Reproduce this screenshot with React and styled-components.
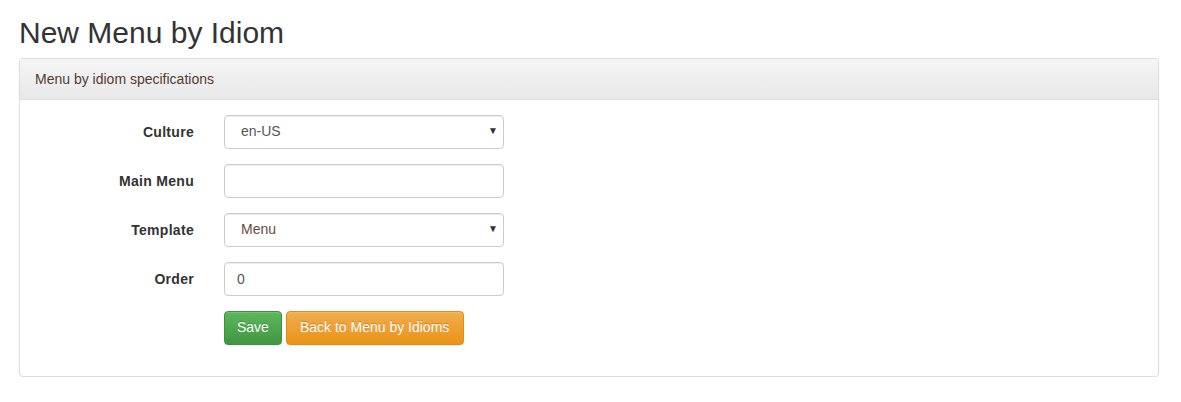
import React from "react";
import styled, { createGlobalStyle } from "styled-components";

// page defaults
const GlobalStyle = createGlobalStyle`
  html, body {
    margin: 0;
    padding: 0;
    background: #fff;
  }
  body {
    font-family: "Liberation Sans", Arial, Helvetica, sans-serif;
    font-size: 14px;
    line-height: 1.42857;
    color: #333;
  }
  * {
    box-sizing: border-box;
  }
`;

const Page = styled.div`
  padding: 0 22px 0 19px;
`;

const Title = styled.h2`
  margin: 16px 0 9px;
  font-size: 30px;
  font-weight: 500;
  line-height: 1.1;
  color: #333;
`;

// panel
const Panel = styled.div`
  border: 1px solid #ddd;
  border-radius: 4px;
  background: #fff;
  box-shadow: 0 1px 2px rgba(0, 0, 0, 0.06);
  overflow: hidden;
`;

const PanelHeading = styled.div`
  padding: 10px 15px;
  height: 41px;
  font-size: 14px;
  line-height: 20px;
  color: #553a33;
  background-image: linear-gradient(to bottom, #f5f5f5 0%, #e8e8e8 100%);
  border-bottom: 1px solid #ddd;
`;

const PanelBody = styled.div`
  padding: 15px 15px 16px;
`;

// form rows
const FormGroup = styled.div`
  display: grid;
  grid-template-columns: 159px 280px;
  column-gap: 30px;
  align-items: center;
  margin-bottom: 15px;
`;

const Label = styled.label`
  text-align: right;
  font-weight: bold;
  font-size: 14px;
  letter-spacing: 0.3px;
  color: #333;
  padding-top: 1px;
`;

const fieldCss = `
  display: block;
  width: 280px;
  height: 34px;
  padding: 6px 12px;
  font-family: "Liberation Sans", Arial, Helvetica, sans-serif;
  font-size: 14px;
  line-height: 1.42857;
  color: #555;
  background: #fff;
  border: 1px solid #ccc;
  border-radius: 4px;
  box-shadow: inset 0 1px 1px rgba(0, 0, 0, 0.075);
  outline: none;
`;

const Input = styled.input`
  ${fieldCss}
`;

const SelectWrap = styled.div`
  position: relative;
  width: 280px;
`;

const Select = styled.select`
  ${fieldCss}
  appearance: none;
  -webkit-appearance: none;
  padding-left: 16px;
  color: ${(p) => p.$tone || "#555"};
`;

const Caret = styled.span`
  position: absolute;
  right: 6px;
  top: 9px;
  font-size: 10px;
  color: #333;
  pointer-events: none;
`;

const Actions = styled.div`
  display: flex;
  gap: 4px;
  margin-left: 189px;
  margin-bottom: 15px;
`;

const Button = styled.button`
  height: 34px;
  padding: 6px 12px;
  font-family: "Liberation Sans", Arial, Helvetica, sans-serif;
  font-size: 14px;
  line-height: 1.42857;
  color: #fff;
  text-shadow: 0 -1px 0 rgba(0, 0, 0, 0.2);
  border-radius: 4px;
  cursor: pointer;
  box-shadow: inset 0 1px 0 rgba(255, 255, 255, 0.15), 0 1px 1px rgba(0, 0, 0, 0.075);
  border: 1px solid ${(p) => (p.$variant === "warning" ? "#e38d13" : "#3e8f3e")};
  background-image: ${(p) =>
    p.$variant === "warning"
      ? "linear-gradient(to bottom, #f0ad4e 0%, #eb9316 100%)"
      : "linear-gradient(to bottom, #5cb85c 0%, #419641 100%)"};
  padding-left: ${(p) => (p.$variant === "warning" ? "13px" : "12px")};
  padding-right: ${(p) => (p.$variant === "warning" ? "14px" : "12px")};
`;

const Field = ({ label, children }) => (
  <FormGroup>
    <Label>{label}</Label>
    {children}
  </FormGroup>
);

export default function App() {
  return (
    <Page>
      <GlobalStyle />
      <Title>New Menu by Idiom</Title>
      <Panel>
        <PanelHeading>Menu by idiom specifications</PanelHeading>
        <PanelBody>
          <Field label="Culture">
            <SelectWrap>
              <Select defaultValue="en-US">
                <option>en-US</option>
              </Select>
              <Caret>▼</Caret>
            </SelectWrap>
          </Field>
          <Field label="Main Menu">
            <Input type="text" />
          </Field>
          <Field label="Template">
            <SelectWrap>
              <Select defaultValue="Menu" $tone="#6a4a42">
                <option>Menu</option>
              </Select>
              <Caret>▼</Caret>
            </SelectWrap>
          </Field>
          <Field label="Order">
            <Input type="text" defaultValue="0" />
          </Field>
          <Actions>
            <Button>Save</Button>
            <Button $variant="warning">Back to Menu by Idioms</Button>
          </Actions>
        </PanelBody>
      </Panel>
    </Page>
  );
}
